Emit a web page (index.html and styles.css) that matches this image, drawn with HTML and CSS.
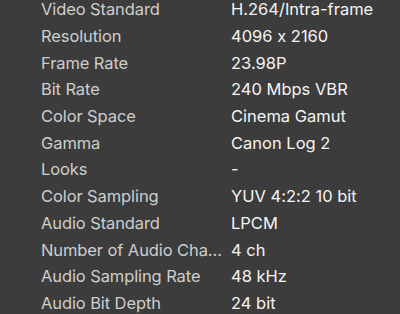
FILE: index.html
```html
<!DOCTYPE html>
<html lang="en">
  <head>
    <meta charset="UTF-8" />
    <meta name="viewport" content="width=device-width, initial-scale=1.0" />
    <title>Clip Info</title>
    <link rel="stylesheet" href="styles.css">
  </head>
  <body>
    <dl class="info-list">
      <dt class="label">Video Standard</dt>
      <dd class="value">H.264/Intra-frame</dd>
      <dt class="label">Resolution</dt>
      <dd class="value">4096 x 2160</dd>
      <dt class="label">Frame Rate</dt>
      <dd class="value">23.98P</dd>
      <dt class="label">Bit Rate</dt>
      <dd class="value">240 Mbps VBR</dd>
      <dt class="label">Color Space</dt>
      <dd class="value">Cinema Gamut</dd>
      <dt class="label">Gamma</dt>
      <dd class="value">Canon Log 2</dd>
      <dt class="label">Looks</dt>
      <dd class="value">-</dd>
      <dt class="label">Color Sampling</dt>
      <dd class="value">YUV 4:2:2 10 bit</dd>
      <dt class="label">Audio Standard</dt>
      <dd class="value">LPCM</dd>
      <dt class="label">Number of Audio Channels</dt>
      <dd class="value">4 ch</dd>
      <dt class="label">Audio Sampling Rate</dt>
      <dd class="value">48 kHz</dd>
      <dt class="label">Audio Bit Depth</dt>
      <dd class="value">24 bit</dd>
    </dl>
  </body>
</html>
```

FILE: styles.css
```css
:root {
  --bg-color: #3c3c3c;
  --label-color: #cecece;
  --value-color: #f4f4f4;
}

* {
  padding: 0;
  margin: 0;
  box-sizing: border-box;
}

body {
  font-family: Inter, "Noto Sans", sans-serif;
  font-size: 16.5px;
  /* keep a plain "x" in "4096 x 2160" */
  font-feature-settings: "calt" 0;
  background: var(--bg-color);
  overflow: hidden;
}

/* two-column list of clip properties */
.info-list {
  display: grid;
  grid-template-columns: 184px 1fr;
  grid-auto-rows: 26.7px;
  column-gap: 6px;
  align-items: center;
  padding-left: 41px;
  margin-top: -4px;
}

.label {
  color: var(--label-color);
  letter-spacing: -0.1px;
  white-space: nowrap;
  overflow: hidden;
  text-overflow: ellipsis;
}

.value {
  color: var(--value-color);
  white-space: nowrap;
}
```
